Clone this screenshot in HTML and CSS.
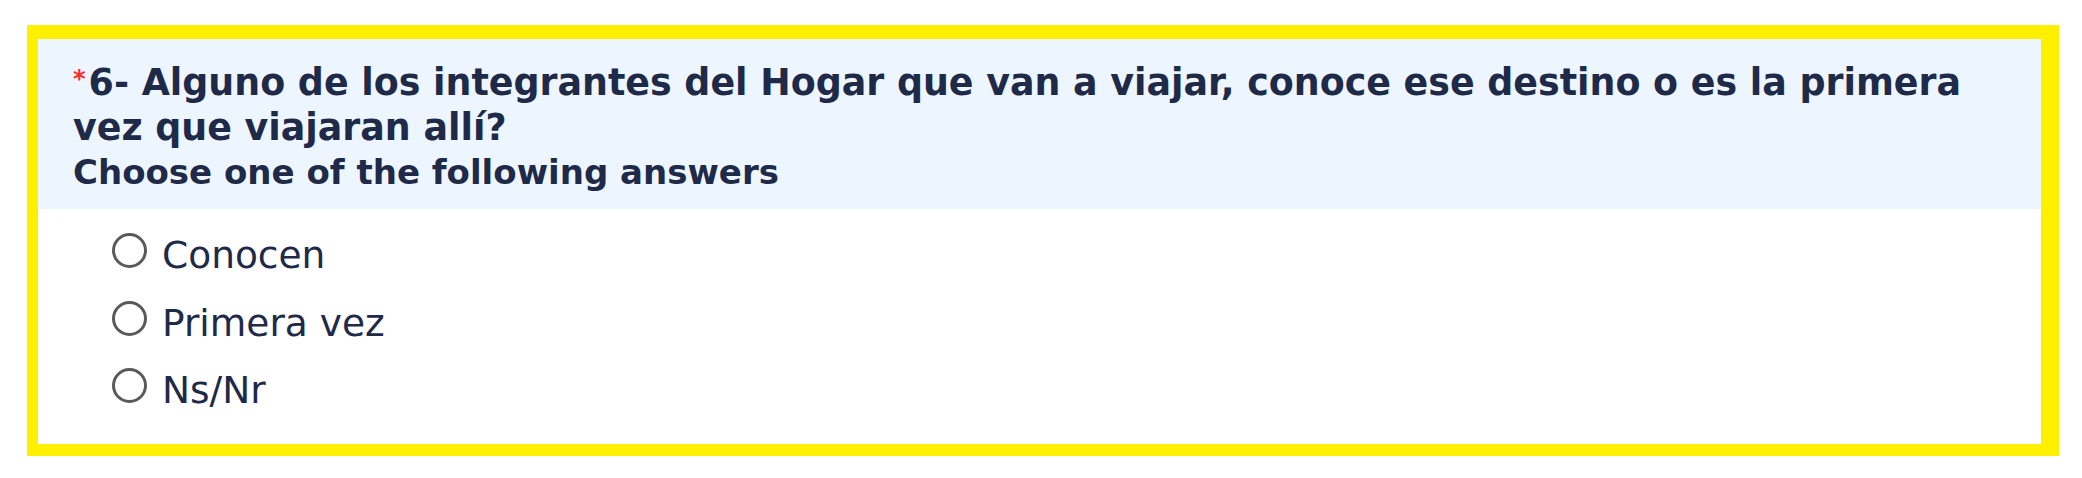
FILE: index.html
```html
<!DOCTYPE html>
<html lang="es">
<head>
<meta charset="utf-8">
<title>Pregunta 6</title>
<link rel="stylesheet" href="styles.css">
</head>
<body>
<div class="question">
  <div class="q-header">
    <div class="q-text"><span class="req">*</span>6- Alguno de los integrantes del Hogar que van a viajar, conoce ese destino o es la primera vez que viajaran allí?</div>
    <div class="q-help">Choose one of the following answers</div>
  </div>
  <ul class="answers">
    <li class="answer"><span class="radio"></span><label class="answer-label">Conocen</label></li>
    <li class="answer"><span class="radio"></span><label class="answer-label">Primera vez</label></li>
    <li class="answer"><span class="radio"></span><label class="answer-label">Ns/Nr</label></li>
  </ul>
</div>
</body>
</html>
```
FILE: styles.css
```css
html, body {
  margin: 0;
  padding: 0;
  background: #ffffff;
}

.question {
  margin: 25px 0 0 27px;
  width: 2003px;
  border-style: solid;
  border-color: #fff000;
  border-width: 14px 18px 12px 11px;
  background: #ffffff;
}

.q-header {
  background: #edf5fe;
  height: 170px;
  box-sizing: border-box;
  padding: 21px 40px 0 35px;
  color: #1e2a48;
  font-family: "DejaVu Sans", Verdana, sans-serif;
  font-weight: bold;
}

.q-text {
  font-size: 36.4px;
  line-height: 45px;
}

.req {
  color: #ff2a2a;
  font-size: 24px;
  vertical-align: 8px;
  line-height: 1;
  margin-right: 3px;
}

.q-help {
  font-size: 34px;
  line-height: 44px;
}

.answers {
  list-style: none;
  margin: 0;
  padding: 14px 0 18.5px 74px;
  font-family: "DejaVu Sans", Verdana, sans-serif;
  color: #1e2a48;
}

.answer {
  display: flex;
  align-items: flex-start;
  height: 67.5px;
}

.radio {
  width: 35px;
  height: 35px;
  box-sizing: border-box;
  border: 3px solid #5a5a5a;
  border-radius: 50%;
  margin-top: 10px;
  flex: none;
}

.answer-label {
  margin-top: 9px;
  margin-left: 15px;
  font-size: 37.5px;
  line-height: 46px;
}
```
